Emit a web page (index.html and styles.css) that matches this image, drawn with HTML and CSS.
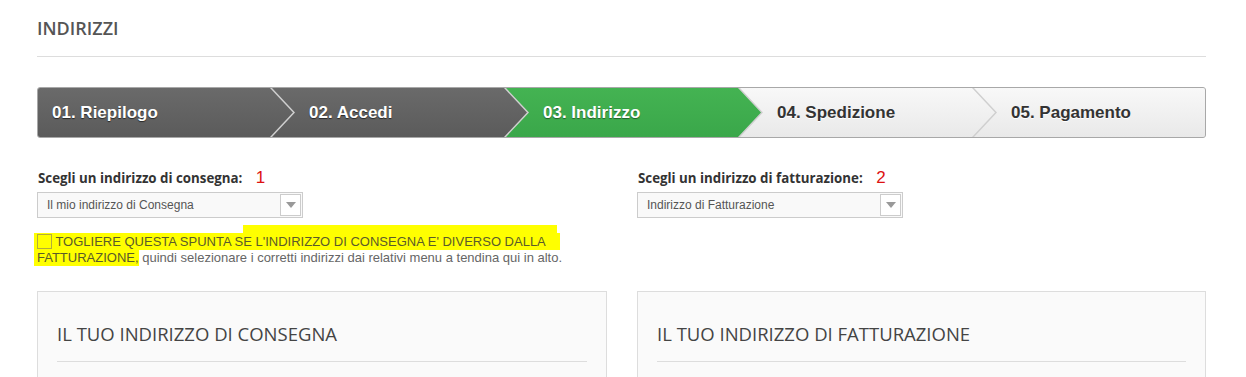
FILE: index.html
```html
<!DOCTYPE html>
<html lang="it">
<head>
  <meta charset="UTF-8" />
  <meta name="viewport" content="width=device-width, initial-scale=1" />
  <title>Indirizzi</title>
  <link rel="stylesheet" href="styles.css">
</head>
<body>
  <div class="page">
    <h1 class="page-title">INDIRIZZI</h1>

    <!-- Checkout steps -->
    <ol class="steps">
      <li class="step done">01. Riepilogo</li>
      <li class="step done">02. Accedi</li>
      <li class="step current">03. Indirizzo</li>
      <li class="step">04. Spedizione</li>
      <li class="step">05. Pagamento</li>
    </ol>

    <div class="choose">
      <div class="choose-col">
        <label class="choose-label">Scegli un indirizzo di consegna: <span class="mark-num">1</span></label>
        <div class="fake-select">
          <span>Il mio indirizzo di Consegna</span>
          <span class="fake-select-btn"><i class="tri"></i></span>
        </div>
        <p class="note">
          <mark class="hl hl-first"><span class="check"></span> TOGLIERE QUESTA SPUNTA SE L'INDIRIZZO DI CONSEGNA E' DIVERSO DALLA</mark><br><mark class="hl">FATTURAZIONE,</mark> quindi selezionare i corretti indirizzi dai relativi menu a tendina qui in alto.
        </p>
      </div>
      <div class="choose-col">
        <label class="choose-label">Scegli un indirizzo di fatturazione: <span class="mark-num">2</span></label>
        <div class="fake-select">
          <span>Indirizzo di Fatturazione</span>
          <span class="fake-select-btn"><i class="tri"></i></span>
        </div>
      </div>
    </div>

    <div class="cards">
      <div class="card">
        <h3 class="card-title">IL TUO INDIRIZZO DI CONSEGNA</h3>
      </div>
      <div class="card">
        <h3 class="card-title">IL TUO INDIRIZZO DI FATTURAZIONE</h3>
      </div>
    </div>
  </div>
</body>
</html>
```

FILE: styles.css
```css
* { box-sizing: border-box; }
html, body {
  margin: 0; padding: 0;
  background: #fff;
  font-family: "Liberation Sans", Arial, sans-serif;
  color: #333;
  overflow: hidden;
}
.page {
  width: 1169px;
  margin-left: 37px;
  padding-top: 16px;
}
.page-title {
  margin: 0;
  padding-bottom: 16px;
  border-bottom: 1px solid #ddd;
  font-family: "Open Sans", sans-serif;
  font-weight: 600;
  font-size: 18px;
  line-height: 24px;
  color: #555;
}

/* steps bar */
.steps {
  list-style: none;
  margin: 30px 0 0;
  padding: 0;
  display: flex;
  height: 51px;
  border: 1px solid #a8a8a8;
  border-radius: 3px;
  overflow: hidden;
  background: #cfcfcf;
}
.step {
  width: 255px;
  flex: none;
  margin-right: -21px;
  padding-left: 37px;
  display: flex;
  align-items: center;
  font-weight: bold;
  font-size: 17px;
  color: #333;
  text-shadow: 0 1px 0 #fff;
  background: linear-gradient(#f8f8f8, #e9e9e9);
  clip-path: polygon(0 0, calc(100% - 23px) 0, 100% 50%, calc(100% - 23px) 100%, 0 100%, 23px 50%);
}
.step:first-child {
  padding-left: 14px;
  clip-path: polygon(0 0, calc(100% - 23px) 0, 100% 50%, calc(100% - 23px) 100%, 0 100%);
}
.step:last-child {
  flex: 1;
  margin-right: 0;
  clip-path: polygon(0 0, 100% 0, 100% 100%, 0 100%, 23px 50%);
}
.step.done {
  background: linear-gradient(#6a6a6a, #5b5b5b);
  color: #fff;
  text-shadow: 0 1px 1px rgba(0,0,0,0.6);
}
.step.current {
  background: linear-gradient(#44b352, #3aa74a);
  color: #fff;
  text-shadow: 0 1px 1px rgba(0,0,0,0.45);
}

/* address choice */
.choose {
  margin-top: 32px;
  display: grid;
  grid-template-columns: 570px 569px;
  gap: 30px;
}
.choose-label {
  display: block;
  padding-left: 1px;
  font-family: "Open Sans", sans-serif;
  font-weight: 700;
  font-size: 13.3px;
  line-height: 16px;
  color: #333;
}
.mark-num {
  margin-left: 10px;
  font-family: "Liberation Sans", sans-serif;
  font-weight: normal;
  font-size: 17px;
  color: #d11;
}
.fake-select {
  margin-top: 6px;
  width: 266px;
  height: 26px;
  border: 1px solid #ccc;
  background: #f9f9f9;
  display: flex;
  align-items: center;
  justify-content: space-between;
  padding: 0 1px 0 9px;
  font-size: 12px;
  color: #555;
}
.fake-select-btn {
  width: 21px;
  height: 22px;
  border: 1px solid #ccc;
  background: #fff;
  display: flex;
  align-items: center;
  justify-content: center;
}
.tri {
  width: 0; height: 0;
  border-left: 5px solid transparent;
  border-right: 5px solid transparent;
  border-top: 6px solid #999;
}
.note {
  position: relative;
  isolation: isolate;
  margin: 16px 0 0;
  font-size: 13px;
  line-height: 16px;
  color: #666;
}
.note::before {
  content: '';
  position: absolute;
  left: 206px;
  top: -9px;
  width: 314px;
  height: 12px;
  background: #ffff00;
  z-index: -1;
}
.hl {
  background: #ffff00;
  color: #5b5b2a;
  margin-left: -3px;
  padding: 1px 0 1px 3px;
}
.hl-first { padding-right: 14px; }
.check {
  display: inline-block;
  width: 15px;
  height: 15px;
  border: 1px solid #b3ad3a;
  vertical-align: -3px;
}

/* address cards */
.cards {
  margin-top: 25px;
  display: grid;
  grid-template-columns: 570px 569px;
  gap: 30px;
}
.card {
  min-height: 140px;
  border: 1px solid #ddd;
  background: #fafafa;
  padding: 30px 19px 0;
}
.card-title {
  margin: 0;
  padding-bottom: 15px;
  border-bottom: 1px solid #ddd;
  font-family: "Open Sans", sans-serif;
  font-weight: 400;
  font-size: 18.5px;
  line-height: 24px;
  color: #444;
}
```
